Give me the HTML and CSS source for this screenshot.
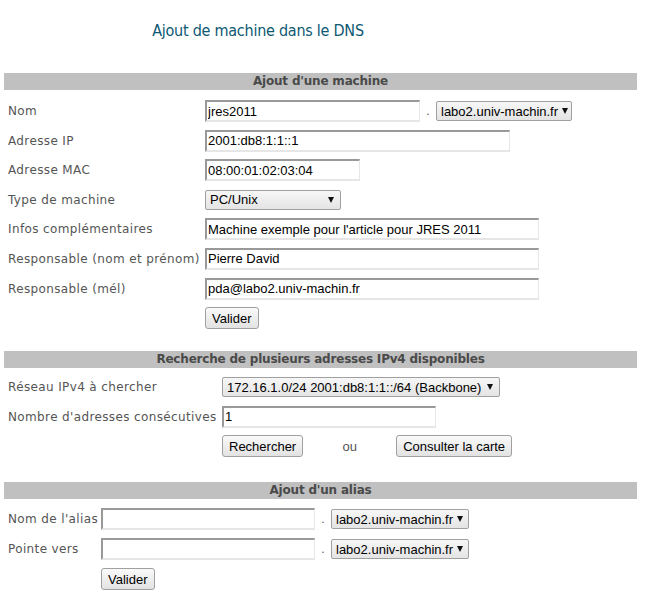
FILE: index.html
```html
<!DOCTYPE html>
<html lang="fr">
<head>
<meta charset="utf-8">
<title>Ajout de machine dans le DNS</title>
<link rel="stylesheet" href="styles.css">
</head>
<body>
<div class="titlebox"><h1 class="title">Ajout de machine dans le DNS</h1></div>

<section class="sec sec1">
  <div class="bar">Ajout d'une machine</div>
  <div class="grid g1">
    <div class="lab">Nom</div>
    <div class="field"><input class="txt w215" value="jres2011"><span class="dot">.</span><span class="sel w136"><span class="selv">labo2.univ-machin.fr</span><span class="arr"></span></span></div>
    <div class="lab">Adresse IP</div>
    <div class="field"><input class="txt w305" value="2001:db8:1:1::1"></div>
    <div class="lab">Adresse MAC</div>
    <div class="field"><input class="txt w155" value="08:00:01:02:03:04"></div>
    <div class="lab">Type de machine</div>
    <div class="field"><span class="sel w136"><span class="selv">PC/Unix</span><span class="arr"></span></span></div>
    <div class="lab">Infos complémentaires</div>
    <div class="field"><input class="txt w334" value="Machine exemple pour l'article pour JRES 2011"></div>
    <div class="lab">Responsable (nom et prénom)</div>
    <div class="field"><input class="txt w334" value="Pierre David"></div>
    <div class="lab">Responsable (mél)</div>
    <div class="field"><input class="txt w334" value="pda@labo2.univ-machin.fr"></div>
    <div class="lab"></div>
    <div class="field"><button class="btn">Valider</button></div>
  </div>
</section>

<section class="sec sec2">
  <div class="bar">Recherche de plusieurs adresses IPv4 disponibles</div>
  <div class="grid g2">
    <div class="lab">Réseau IPv4 à chercher</div>
    <div class="field"><span class="sel w278"><span class="selv">172.16.1.0/24 2001:db8:1:1::/64 (Backbone)</span><span class="arr"></span></span></div>
    <div class="lab">Nombre d'adresses consécutives</div>
    <div class="field"><input class="txt w214" value="1"></div>
    <div class="lab"></div>
    <div class="field"><button class="btn">Rechercher</button><span class="ou">ou</span><button class="btn">Consulter la carte</button></div>
  </div>
</section>

<section class="sec sec3">
  <div class="bar">Ajout d'un alias</div>
  <div class="grid g3">
    <div class="lab">Nom de l'alias</div>
    <div class="field"><input class="txt w214" value=""><span class="dot">.</span><span class="sel w138"><span class="selv">labo2.univ-machin.fr</span><span class="arr"></span></span></div>
    <div class="lab">Pointe vers</div>
    <div class="field"><input class="txt w214" value=""><span class="dot">.</span><span class="sel w138"><span class="selv">labo2.univ-machin.fr</span><span class="arr"></span></span></div>
    <div class="lab"></div>
    <div class="field"><button class="btn">Valider</button></div>
  </div>
</section>
</body>
</html>
```

FILE: styles.css
```css
html, body {
  margin: 0;
  padding: 0;
  background: #fff;
}
body {
  font-family: "DejaVu Sans", Verdana, sans-serif;
  font-size: 12px;
  color: #555;
}
.titlebox {
  width: 516px;
  text-align: center;
  padding-top: 19px;
  height: 54px;
  box-sizing: border-box;
}
.title {
  margin: 0;
  font-family: "DejaVu Sans Condensed", "DejaVu Sans", sans-serif;
  font-weight: normal;
  font-size: 16px;
  letter-spacing: -0.25px;
  line-height: 24px;
  color: #0d5872;
}
.sec {
  margin-left: 4px;
  width: 633px;
}
.bar {
  background: #c0c0c0;
  height: 17px;
  line-height: 17px;
  text-align: center;
  font-weight: bold;
  letter-spacing: -0.2px;
  color: #4a4a4a;
}
.sec1 { margin-top: 19px; }
.sec2 { margin-top: 22px; }
.sec3 { margin-top: 25px; }
.grid {
  display: grid;
  padding-left: 4px;
  align-items: center;
  grid-auto-rows: 22px;
}
.g1 { grid-template-columns: 197px auto; margin-top: 10px; row-gap: 7.6px; }
.g2 { grid-template-columns: 214px auto; margin-top: 8px; row-gap: 7.5px; }
.g3 { grid-template-columns: 93px auto; margin-top: 9px; row-gap: 8px; }
.lab {
  white-space: nowrap;
  letter-spacing: 0.37px;
}
.field {
  display: flex;
  align-items: center;
  height: 22px;
}
.txt {
  box-sizing: border-box;
  height: 22px;
  margin: 0;
  padding: 0 1px;
  border-style: solid;
  border-width: 2px 1px 2px 2px;
  border-color: #999 #e6e6e6 #e6e6e6 #999;
  font-family: "Liberation Sans", Arial, sans-serif;
  font-size: 13px;
  color: #000;
  background: #fff;
  outline: none;
}
.w155 { width: 155px; }
.w214 { width: 214px; }
.w215 { width: 215px; }
.w305 { width: 305px; }
.w334 { width: 334px; }
.dot {
  width: 16px;
  text-align: center;
  color: #555;
  font-family: "Liberation Sans", Arial, sans-serif;
}
.sel {
  box-sizing: border-box;
  height: 20px;
  display: inline-flex;
  align-items: center;
  justify-content: space-between;
  border: 1px solid #a0a0a0;
  border-radius: 2px;
  background: linear-gradient(#f7f7f7, #e4e4e4);
  padding: 0 6px 0 4px;
  font-family: "Liberation Sans", Arial, sans-serif;
  font-size: 13px;
  color: #000;
  white-space: nowrap;
}
.w136 { width: 136px; }
.w138 { width: 138px; }
.w278 { width: 278px; }
.arr {
  flex: none;
  width: 0;
  height: 0;
  border-left: 3px solid transparent;
  border-right: 3px solid transparent;
  border-top: 6px solid #111;
  margin-left: 4px;
}
.btn {
  box-sizing: border-box;
  height: 22px;
  margin: 0;
  padding: 0 6px;
  border: 1px solid #a0a0a0;
  border-radius: 3px;
  background: linear-gradient(#fafafa, #e2e2e2);
  font-family: "Liberation Sans", Arial, sans-serif;
  font-size: 13px;
  color: #000;
}
.ou {
  width: 93px;
  text-align: center;
  color: #555;
  font-family: "Liberation Sans", Arial, sans-serif;
  font-size: 13px;
}
```
